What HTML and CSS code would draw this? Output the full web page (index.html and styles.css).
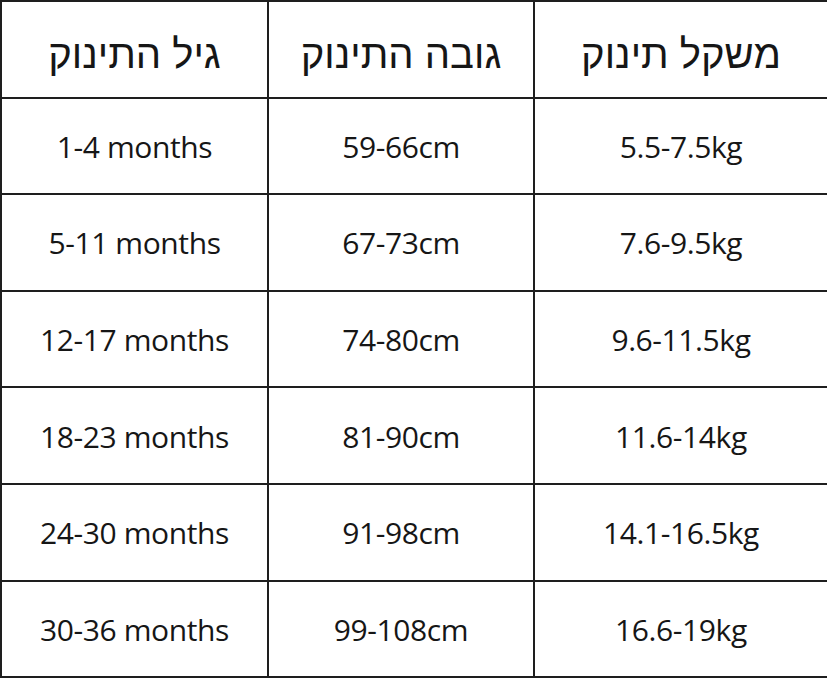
FILE: index.html
```html
<!DOCTYPE html>
<html lang="he">
<head>
<meta charset="utf-8">
<link rel="stylesheet" href="styles.css">
</head>
<body>
<table class="size-table" dir="rtl">
  <colgroup>
    <col class="col-weight">
    <col class="col-height">
    <col class="col-age">
  </colgroup>
  <thead>
    <tr>
      <th>משקל תינוק</th>
      <th>גובה התינוק</th>
      <th>גיל התינוק</th>
    </tr>
  </thead>
  <tbody>
    <tr><td dir="ltr">5.5-7.5kg</td><td dir="ltr">59-66cm</td><td dir="ltr">1-4 months</td></tr>
    <tr><td dir="ltr">7.6-9.5kg</td><td dir="ltr">67-73cm</td><td dir="ltr">5-11 months</td></tr>
    <tr><td dir="ltr">9.6-11.5kg</td><td dir="ltr">74-80cm</td><td dir="ltr">12-17 months</td></tr>
    <tr><td dir="ltr">11.6-14kg</td><td dir="ltr">81-90cm</td><td dir="ltr">18-23 months</td></tr>
    <tr><td dir="ltr">14.1-16.5kg</td><td dir="ltr">91-98cm</td><td dir="ltr">24-30 months</td></tr>
    <tr><td dir="ltr">16.6-19kg</td><td dir="ltr">99-108cm</td><td dir="ltr">30-36 months</td></tr>
  </tbody>
</table>
</body>
</html>
```

FILE: styles.css
```css
html, body {
  margin: 0;
  padding: 0;
  background: #ffffff;
}

.size-table {
  width: 827px;
  border-collapse: collapse;
  table-layout: fixed;
  color: #161616;
}

.col-weight { width: 294px; }
.col-height { width: 266px; }
.col-age { width: 267px; }

.size-table th,
.size-table td {
  border: 2px solid #1e1e1e;
  text-align: center;
  vertical-align: middle;
  padding: 0;
  overflow: hidden;
}

.size-table th {
  font-family: "Liberation Sans", "DejaVu Sans", sans-serif;
  font-weight: normal;
  font-size: 40px;
  line-height: 40px;
  height: 84.6px;
  padding-top: 10px;
}

.size-table td {
  font-family: "Open Sans", "Noto Sans", sans-serif;
  font-size: 30px;
  line-height: 36px;
  height: 92.6px;
  padding-top: 2px;
  letter-spacing: -0.4px;
}

.size-table tr > :first-child {
  border-right-color: #cfcfcf;
}
```
